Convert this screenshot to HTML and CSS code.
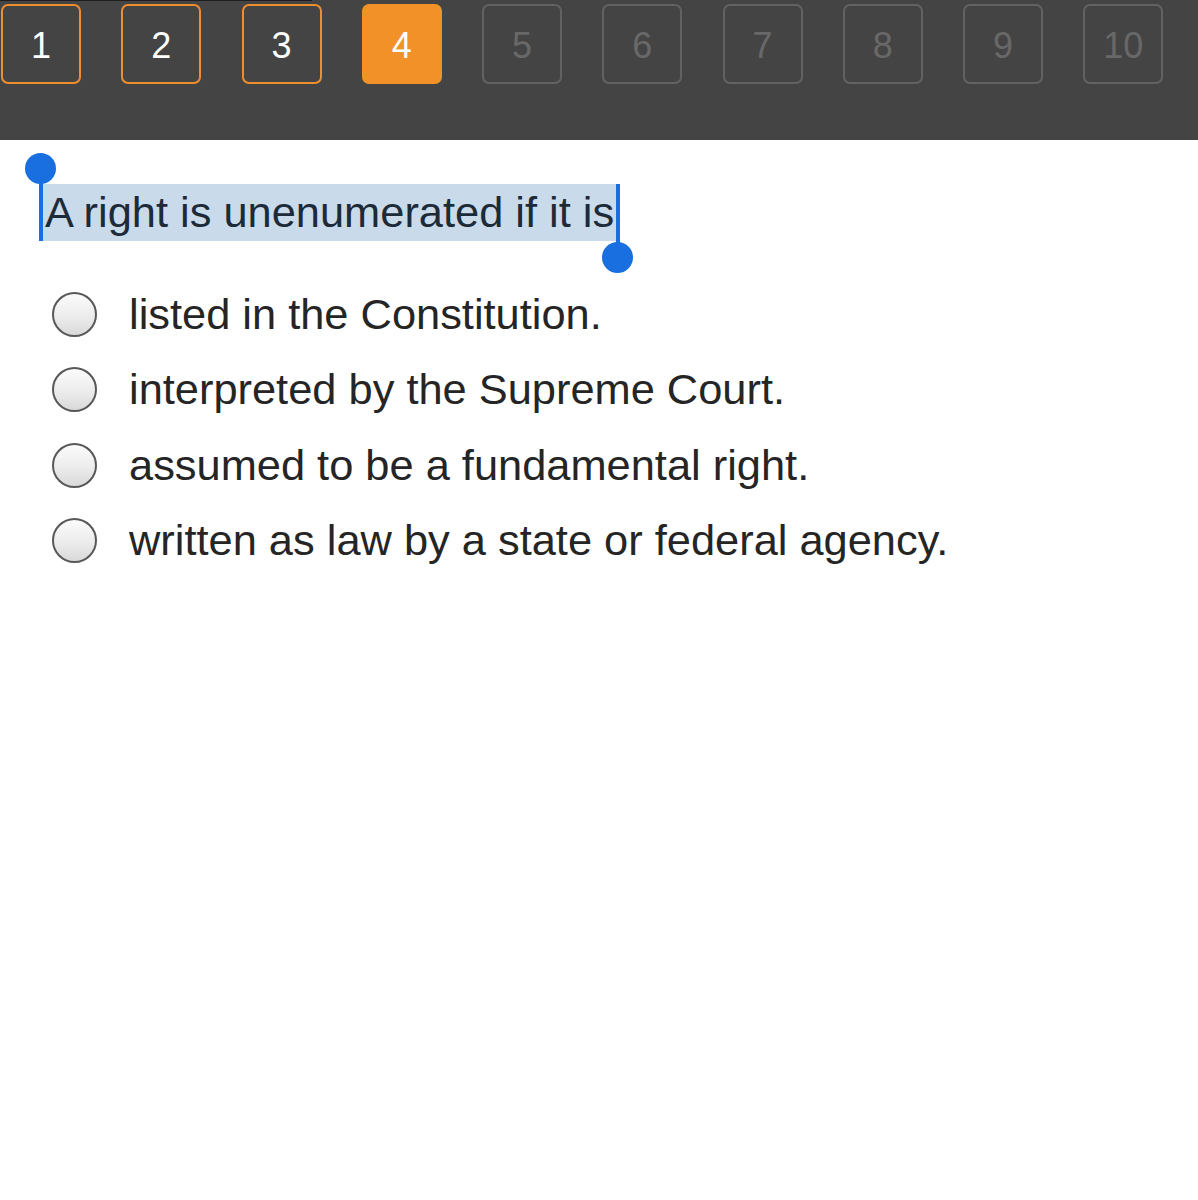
FILE: index.html
```html
<!DOCTYPE html>
<html lang="en">
<head>
<meta charset="utf-8">
<title>Question 4</title>
<link rel="stylesheet" href="styles.css">
</head>
<body>
<nav class="topbar">
  <div class="pager">
    <span class="pg done">1</span>
    <span class="pg done">2</span>
    <span class="pg done">3</span>
    <span class="pg current">4</span>
    <span class="pg">5</span>
    <span class="pg">6</span>
    <span class="pg">7</span>
    <span class="pg">8</span>
    <span class="pg">9</span>
    <span class="pg">10</span>
  </div>
</nav>
<main class="content">
  <p class="question"><span class="sel">A right is unenumerated if it is<span class="handle start"></span><span class="handle end"></span></span></p>
  <ul class="options">
    <li class="opt"><span class="radio"></span><span class="label">listed in the Constitution.</span></li>
    <li class="opt"><span class="radio"></span><span class="label">interpreted by the Supreme Court.</span></li>
    <li class="opt"><span class="radio"></span><span class="label">assumed to be a fundamental right.</span></li>
    <li class="opt"><span class="radio"></span><span class="label">written as law by a state or federal agency.</span></li>
  </ul>
</main>
</body>
</html>
```
FILE: styles.css
```css
html, body {
  margin: 0;
  padding: 0;
  background: #ffffff;
  font-family: "Liberation Sans", Arial, Helvetica, sans-serif;
}

.topbar {
  position: relative;
  height: 140px;
  background: #444444;
  box-sizing: border-box;
  padding-top: 4px;
}

.topbar::before {
  content: "";
  position: absolute;
  left: 0;
  top: 0;
  width: 312px;
  height: 1px;
  background: #1e1e1e;
}

.pager {
  display: flex;
  gap: 40.25px;
  padding-left: 1px;
}

.pg {
  box-sizing: border-box;
  width: 80px;
  height: 80px;
  border: 2px solid #626262;
  border-radius: 7px;
  color: #686868;
  font-size: 36px;
  display: flex;
  align-items: center;
  justify-content: center;
  padding-top: 4px;
}

.pg.done {
  border-color: #ee8e2e;
  color: #ffffff;
}

.pg.current {
  border-color: #f39129;
  background: #f39129;
  color: #ffffff;
}

.content {
  padding-top: 44px;
}

.question {
  margin: 0 0 0 41px;
  font-size: 43.4px;
  line-height: 57px;
  height: 57px;
  color: #1d2a38;
}

.sel {
  position: relative;
  display: inline-block;
  background: #c9daeb;
  padding-left: 4px;
  padding-right: 2px;
  height: 57px;
}

.handle {
  position: absolute;
  width: 4px;
  background: #1a6fe0;
}

.handle::after {
  content: "";
  position: absolute;
  width: 31px;
  height: 31px;
  border-radius: 50%;
  background: #1a6fe0;
  left: -14px;
}

.handle.start {
  left: -2px;
  top: -14px;
  height: 71px;
}

.handle.start::after {
  top: -17px;
}

.handle.end {
  right: -4px;
  top: 0;
  height: 73px;
}

.handle.end::after {
  bottom: -16px;
}

.options {
  list-style: none;
  margin: 36px 0 0 0;
  padding: 0 0 0 52px;
}

.opt {
  display: flex;
  align-items: center;
  height: 75.3px;
}

.radio {
  box-sizing: border-box;
  width: 45px;
  height: 45px;
  border-radius: 50%;
  border: 2px solid #585858;
  background: linear-gradient(to bottom, #fbfbfb 0%, #ececec 55%, #d9d9d9 100%);
  flex: none;
}

.label {
  margin-left: 32px;
  font-size: 43.4px;
  line-height: 75.3px;
  color: #252525;
  white-space: nowrap;
}
```
